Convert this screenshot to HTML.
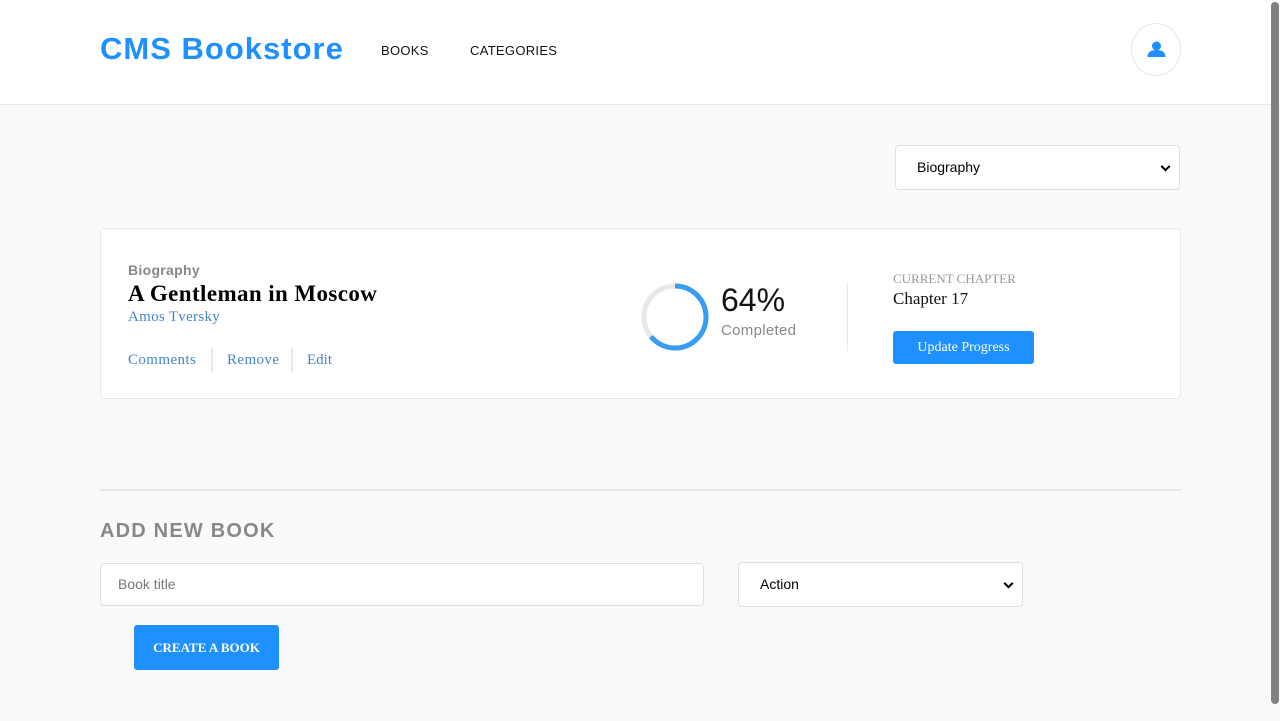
<!DOCTYPE html>
<html><head><style>
*{box-sizing:border-box;margin:0;padding:0}
body{width:1280px;height:721px;background:#fafafa;font-family:"Liberation Sans",sans-serif;position:relative;overflow:hidden}
.hdr{position:absolute;left:0;top:0;width:1280px;height:105px;background:#fff;border-bottom:1px solid #e8e8e8}
.logo{position:absolute;left:100px;top:31px;font-size:31px;font-weight:bold;color:#1e90ff;letter-spacing:1px}
.nav{position:absolute;top:43px;font-size:13px;color:#121212;letter-spacing:0.3px}
.av{position:absolute;left:1131px;top:23px;width:50px;height:53px;border:1px solid #e8e8e8;border-radius:50%}
.sb{position:absolute;left:1271px;top:2px;width:8px;height:702px;background:#808080;border-radius:4px}
.sel{position:absolute;background:#fff;border:1px solid #e0e0e0;border-radius:4px;font-size:14px;color:#000;padding-left:21px}
.sel:after{content:"";position:absolute;right:10px;top:50%;width:5px;height:5px;border-right:2px solid #000;border-bottom:2px solid #000;transform:translateY(-70%) rotate(45deg)}
.card{position:absolute;left:100px;top:228px;width:1081px;height:171px;background:#fff;border:1px solid #e8e8e8;border-radius:4px}
.serif{font-family:"Liberation Serif",serif}
</style></head><body>
<div class="hdr">
<div class="logo">CMS Bookstore</div>
<div class="nav" style="left:381px">BOOKS</div>
<div class="nav" style="left:470px">CATEGORIES</div>
<div class="av"><svg width="50" height="53" viewBox="0 0 50 53"><circle cx="24.5" cy="22" r="4.5" fill="#1e90ff"/><path d="M15.5 33 Q15.5 26 24.5 26 Q33.5 26 33.5 33 Z" fill="#1e90ff"/></svg></div>
</div>
<div class="sb"></div>
<div class="sel" style="left:895px;top:145px;width:285px;height:45px;line-height:43px">Biography</div>
<div class="card">
<div style="position:absolute;left:27px;top:33px;font-size:14px;font-weight:bold;color:#888;letter-spacing:0.3px">Biography</div>
<div class="serif" style="position:absolute;left:27px;top:52px;font-size:23px;font-weight:bold;color:#000;letter-spacing:0.4px">A Gentleman in Moscow</div>
<div class="serif" style="position:absolute;left:27px;top:80px;font-size:15px;color:#4386cc;letter-spacing:0.3px">Amos Tversky</div>
<div class="serif" style="position:absolute;left:27px;top:123px;font-size:15px;color:#4386cc;letter-spacing:0.4px">Comments</div>
<div style="position:absolute;left:110px;top:119px;width:2px;height:24px;background:#e8e8e8"></div>
<div class="serif" style="position:absolute;left:126px;top:123px;font-size:15px;color:#4386cc;letter-spacing:0.4px">Remove</div>
<div style="position:absolute;left:190px;top:119px;width:2px;height:24px;background:#e8e8e8"></div>
<div class="serif" style="position:absolute;left:206px;top:123px;font-size:15px;color:#4386cc">Edit</div>
<svg style="position:absolute;left:538px;top:53px" width="72" height="72" viewBox="0 0 72 72"><circle cx="36" cy="35" r="31" fill="none" stroke="#e8e8e8" stroke-width="5"/><circle cx="36" cy="35" r="31" fill="none" stroke="#379cf4" stroke-width="5" stroke-dasharray="124.7 200" transform="rotate(-90 36 35)"/></svg>
<div style="position:absolute;left:620px;top:53px;font-size:32px;color:#121212">64%</div>
<div style="position:absolute;left:620px;top:93px;font-size:15px;color:#888;letter-spacing:0.3px">Completed</div>
<div style="position:absolute;left:746px;top:53px;width:1px;height:69px;background:#e8e8e8"></div>
<div class="serif" style="position:absolute;left:792px;top:42px;font-size:13px;color:#999">CURRENT CHAPTER</div>
<div class="serif" style="position:absolute;left:792px;top:60px;font-size:17px;color:#121212">Chapter 17</div>
<div class="serif" style="position:absolute;left:792px;top:102px;width:141px;height:33px;background:#1e90ff;border-radius:3px;color:#fff;font-size:14px;text-align:center;line-height:33px">Update Progress</div>
</div>
<div style="position:absolute;left:100px;top:489px;width:1081px;height:2px;background:#e5e5e5"></div>
<div style="position:absolute;left:100px;top:520px;font-size:20px;font-weight:bold;color:#888;letter-spacing:1.2px">ADD NEW BOOK</div>
<div style="position:absolute;left:100px;top:563px;width:604px;height:43px;background:#fff;border:1px solid #e0e0e0;border-radius:4px;font-size:14px;color:#777;padding-left:17px;line-height:41px">Book title</div>
<div class="sel" style="left:738px;top:562px;width:285px;height:45px;line-height:43px;padding-left:21px">Action</div>
<div class="serif" style="position:absolute;left:134px;top:625px;width:145px;height:45px;background:#1e90ff;border-radius:3px;color:#fff;font-size:13px;font-weight:bold;text-align:center;line-height:45px">CREATE A BOOK</div>
</body></html>
